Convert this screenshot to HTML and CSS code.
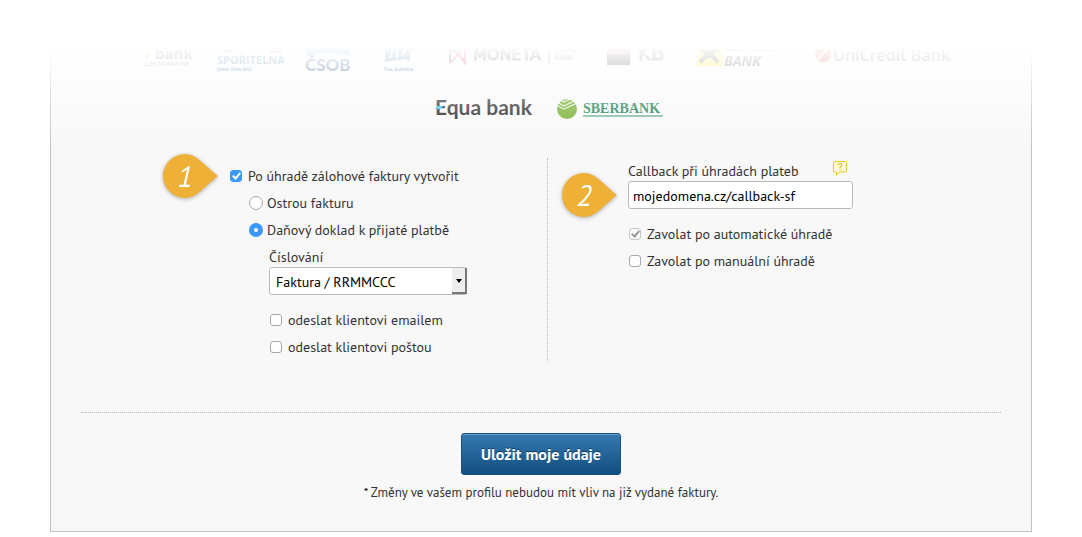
FILE: index.html
```
<!DOCTYPE html>
<html lang="cs">
<head>
 <meta charset="utf-8"/>
 <meta name="viewport" content="width=device-width, initial-scale=1"/>
 <title>Nastavení plateb</title>
 <link rel="stylesheet" href="styles.css">
</head>

<body>
<form class="card">

 <!-- supported banks -->
 <div class="banks">
  <svg width="64" height="50" viewBox="0 0 64 50" role="img" aria-label="Air bank">
   <path d="M14 28 L20 15" stroke="#a6b400" stroke-width="2"/>
   <text x="23" y="29" class="logo-bold" font-size="15" fill="#444">bank</text>
   <text x="12" y="36" class="logo" font-size="5" fill="#444">ČLEN SKUPINY PPF</text>
  </svg>
  <svg width="68" height="50" viewBox="0 0 68 50" role="img" aria-label="Česká spořitelna">
   <path d="M7 19 Q11 24 16 19 M24 19 V22 M36 19 H64 V22 H54" stroke="#d22" stroke-width="2" fill="none"/>
   <text x="1" y="34" class="logo-bold" font-size="11" fill="#1d5a9a">SPOŘITELNA</text>
   <text x="1" y="41" class="logo-bold" font-size="5" fill="#1d5a9a">Jsme Vám blíž.</text>
  </svg>
  <svg width="52" height="50" viewBox="0 0 52 50" role="img" aria-label="ČSOB">
   <path d="M2 16 H46 V26 Q24 20 2 26Z" fill="#2ba5dd"/>
   <text x="1" y="41" class="logo-heavy" font-size="17" fill="#0c447c">ČSOB</text>
  </svg>
  <svg width="51" height="50" viewBox="0 0 51 50" role="img" aria-label="Fio banka">
   <path d="M9 32 V16 H45 L34 22 V31 L28 29Z" fill="#1f5a9e"/>
   <path d="M14 28 L18 16 M21 28 V16 M26 26 L30 18" stroke="#fff" stroke-width="2"/>
   <text x="8" y="41" class="logo-bold" font-size="6" fill="#1f5a9e">Fio banka</text>
  </svg>
  <svg width="137" height="50" viewBox="0 0 137 50" role="img" aria-label="Moneta Money Bank">
   <path d="M3 33 V17 L18 31" stroke="#222" stroke-width="2" fill="none"/>
   <path d="M3 33 L18 17 V33 L8 21" stroke="#c3122d" stroke-width="2" fill="none"/>
   <text x="26" y="30" class="logo-wide" font-size="16" fill="#222" stroke="#222">MONETA</text>
   <path d="M102 17 V34" stroke="#222"/>
   <text x="108" y="22" class="logo" font-size="7" fill="#222">MONEY</text>
   <text x="108" y="30" class="logo" font-size="7" fill="#222">BANK</text>
  </svg>
  <svg width="72" height="50" viewBox="0 0 72 50" role="img" aria-label="KB">
   <path d="M3 11 H26 V23 H3Z" fill="#d32"/>
   <path d="M3 23 H26 V35 H3Z" fill="#222"/>
   <path d="M6 23 H23" stroke="#fff"/>
   <text x="34" y="30" class="logo-wide" font-size="20" fill="#444" stroke="#444">KB</text>
  </svg>
  <svg width="97" height="50" viewBox="0 0 97 50" role="img" aria-label="Raiffeisen Bank">
   <path d="M1 11 H26 V36 H1Z" fill="#fbe400"/>
   <path d="M4 32 L13 23 L22 32 M5 18 L13 26 L21 18" stroke="#222" stroke-width="4" fill="none"/>
   <text x="28" y="21" class="logo-bold" font-size="11" fill="#333">Raiffeisen</text>
   <text x="28" y="36" class="logo-bold slanted" font-size="14" fill="#333">BANK</text>
  </svg>
  <svg width="137" height="50" viewBox="0 0 137 50" role="img" aria-label="UniCredit Bank">
   <circle cx="10" cy="24" r="8" fill="#e2222a"/>
   <path d="M4 30 L15 18" stroke="#fff" stroke-width="2"/>
   <text x="20" y="31" class="logo-sans" font-size="16" fill="#555">UniCredit Bank</text>
  </svg>
 </div>

 <div class="banks banks-more">
  <svg width="100" height="32" viewBox="0 0 100 32" role="img" aria-label="Equa bank">
   <text x="1" y="23" class="logo-equa" font-size="21" fill="#111">Equa bank</text>
   <path d="M1 17 L3 14 H9 L7 17Z" fill="#2bb5f0"/>
  </svg>
  <svg width="107" height="32" viewBox="0 0 107 32" role="img" aria-label="Sberbank">
   <circle cx="10" cy="17" r="10" fill="#69a81c"/>
   <path d="M0 10 L7 14 L19 8 M1 14 L7 17 L20 11 M1 7 L7 10 L17 5" stroke="#fff" stroke-width="1" fill="none"/>
   <text x="26" y="21" class="logo-serif" font-size="14" fill="#00703f">SBERBANK</text>
   <path d="M26 24 H106" stroke="#00703f"/>
  </svg>
 </div>

 <div class="columns">
  <div class="col col-left">
   <div class="row">
    <span class="pin">
     <svg width="55" height="44" viewBox="0 0 55 44" aria-hidden="true"><path d="M22 0 C34 0 42 12 55 22 C42 32 34 44 22 44 A22 22 0 0 1 22 0Z" fill="#eeb037"/></svg>
     <b>1</b>
    </span>
    <input type="checkbox" id="create" checked>
    <label for="create">Po úhradě zálohové faktury vytvořit</label>
   </div>
   <div class="row level1">
    <input type="radio" name="doc" id="invoice">
    <label for="invoice">Ostrou fakturu</label>
   </div>
   <div class="row level1">
    <input type="radio" name="doc" id="tax" checked>
    <label for="tax">Daňový doklad k přijaté platbě</label>
   </div>
   <div class="level2">
    <label class="title" for="numbering">Číslování</label>
    <div class="select">
     <select id="numbering"><option>Faktura / RRMMCCC</option></select>
    </div>
    <div class="row">
     <input type="checkbox" id="email">
     <label for="email">odeslat klientovi emailem</label>
    </div>
    <div class="row">
     <input type="checkbox" id="post">
     <label for="post">odeslat klientovi poštou</label>
    </div>
   </div>
  </div>

  <div class="col col-right">
   <div class="field">
    <div class="heading">
     <label class="title" for="callback">Callback při úhradách plateb</label>
     <svg width="14" height="15" viewBox="0 0 14 15" aria-hidden="true">
      <path d="M1.5 .5 H12.5 Q13.5 .5 13.5 1.5 V10 Q13.5 11 12.5 11 H7 L3.5 14 V11 H1.5 Q.5 11 .5 10 V1.5 Q.5 .5 1.5 .5Z" fill="#fffbd6" stroke="#efc52e"/>
      <path d="M5 4 Q5.200 2.500 7 2.500 Q9 2.500 9 4 Q9 5 7 6 V7 M7 8 V9.500" fill="none" stroke="#e3ac12"/>
     </svg>
    </div>
    <div class="input">
     <input type="text" id="callback" value="mojedomena.cz/callback-sf">
     <span class="pin">
      <svg width="55" height="44" viewBox="0 0 55 44" aria-hidden="true"><path d="M22 0 C34 0 42 12 55 22 C42 32 34 44 22 44 A22 22 0 0 1 22 0Z" fill="#eeb037"/></svg>
      <b>2</b>
     </span>
    </div>
   </div>
   <div class="row">
    <input type="checkbox" id="auto" checked disabled>
    <label for="auto">Zavolat po automatické úhradě</label>
   </div>
   <div class="row">
    <input type="checkbox" id="manual">
    <label for="manual">Zavolat po manuální úhradě</label>
   </div>
  </div>
 </div>

 <div class="actions">
  <button type="button">Uložit moje údaje</button>
  <p>* Změny ve vašem profilu nebudou mít vliv na již vydané faktury.</p>
 </div>
</form>
</body>
</html>
```
FILE: styles.css
```
*, *::before, *::after { box-sizing: border-box; }
body {
 margin: 0;
 background: #fff;
 color: #333;
 font-family: "PT Sans", "Noto Sans", sans-serif;
 font-size: 14px;
 line-height: 20px;
}
/* white fade over the top of the page */
body::before {
 content: "";
 position: absolute;
 z-index: 1;
 top: 0;
 left: 0;
 right: 0;
 height: 150px;
 pointer-events: none;
 background: linear-gradient(#fff 48px, rgba(255,255,255,.96) 50px, rgba(255,255,255,.85) 64px, rgba(255,255,255,.72) 74px, rgba(255,255,255,.35) 108px, rgba(255,255,255,0) 145px);
}
.card {
 margin: 0 50px;
 padding: 30px 30px 28px;
 border: 1px solid #c2c2c2;
 border-top: 0;
 background: #f8f8f8;
}

/* bank logos */
.banks {
 display: flex;
 justify-content: center;
 gap: 20px;
}
.banks svg { flex: none; }
.banks-more {
 gap: 23px;
 margin-top: 12px;
 padding-left: 16px;
}
.logo       { font-family: "Lato", sans-serif; }
.logo-bold  { font-family: "Open Sans", sans-serif; font-weight: bold; }
.logo-heavy { font-family: "Lato", sans-serif; font-weight: 900; }
.logo-wide  { font-family: "DejaVu Sans", sans-serif; }
.logo-sans  { font-family: "Open Sans", sans-serif; font-weight: 600; }
.logo-equa  { font-family: "Lato", sans-serif; font-weight: bold; }
.logo-serif { font-family: "Liberation Serif", serif; font-weight: bold; }
.slanted    { font-style: italic; }

/* form */
.columns {
 display: grid;
 grid-template-columns: 467fr 453fr;
 margin-top: 34px;
}
.col-left {
 padding: 4px 0 2px 148px;
 border-right: 1px dotted #bbb;
}
.col-right { padding: 3px 0 0 80px; }
.row {
 position: relative;
 display: flex;
 align-items: center;
 height: 27px;
}
.level1 { margin-left: 20px; }
.level2 {
 margin-left: 40px;
 padding-top: 4px;
}
.title { display: block; }

input, select, button {
 margin: 0;
 font: inherit;
}
input[type=checkbox], input[type=radio] {
 appearance: none;
 flex: none;
 width: 12px;
 height: 12px;
 margin: 0 6px 0 1px;
 border: 1px solid #a8a8a8;
 border-radius: 3px;
 background: #fff;
}
input[type=checkbox]:checked {
 display: flex;
 align-items: center;
 justify-content: center;
 border-color: #3b99fc;
 background: #3b99fc;
}
input[type=checkbox]:checked::before {
 content: "";
 width: 5px;
 height: 8px;
 margin-bottom: 2px;
 border: solid #fff;
 border-width: 0 2px 2px 0;
 transform: rotate(40deg);
}
input[type=checkbox]:disabled {
 border-color: #c8c8c8;
 background: #fafafa;
}
input[type=checkbox]:disabled::before { border-color: #999; }
input[type=radio] {
 width: 14px;
 height: 14px;
 margin: 0 4px 0 0;
 border-radius: 50%;
}
input[type=radio]:checked { border: 5px solid #3b99fc; }

.select {
 position: relative;
 width: 198px;
 margin-bottom: 11px;
}
select, input[type=text] {
 display: block;
 width: 100%;
 height: 28px;
 padding: 2px 4px 0;
 border: 1px solid #bbb;
 border-radius: 3px;
 background: #fff;
 color: #000;
}
select {
 appearance: none;
 padding: 2px 20px 0 6px;
}
.select::before {
 content: "";
 position: absolute;
 top: 1px;
 right: 0;
 width: 15px;
 height: 26px;
 border: solid #777;
 border-width: 0 2px 2px 0;
 background: #eee;
 pointer-events: none;
}
.select::after {
 content: "";
 position: absolute;
 top: 12px;
 right: 5px;
 border: solid transparent;
 border-width: 4px 3px 0;
 border-top-color: #000;
 pointer-events: none;
}
.field {
 width: 225px;
 margin-bottom: 11px;
}
.heading {
 display: flex;
 justify-content: space-between;
 padding-right: 6px;
}
.input { position: relative; }

/* numbered pins pointing at the fields */
.pin {
 position: absolute;
 top: 50%;
 right: 100%;
 width: 55px;
 height: 44px;
 margin: -22px 11px 0 0;
 filter: drop-shadow(0 1px 2px rgba(0,0,0,.3));
}
.pin svg { display: block; }
.pin b {
 position: absolute;
 top: 0;
 left: 0;
 width: 44px;
 color: #fff;
 font-size: 30px;
 font-style: italic;
 font-weight: normal;
 line-height: 44px;
 text-align: center;
}

.actions {
 margin-top: 50px;
 padding-top: 20px;
 border-top: 1px dotted #bbb;
 text-align: center;
}
button {
 width: 160px;
 height: 42px;
 padding: 0;
 border: 1px solid #164f80;
 border-radius: 3px;
 background: linear-gradient(#3579b1, #134e80);
 box-shadow: inset 0 1px 0 #6ba0c9;
 color: #fff;
 font-size: 16px;
 font-weight: bold;
 text-shadow: 0 -1px 0 #0c3a61;
}
.actions p {
 margin: 8px 0 0;
 font-size: 13px;
}
```
